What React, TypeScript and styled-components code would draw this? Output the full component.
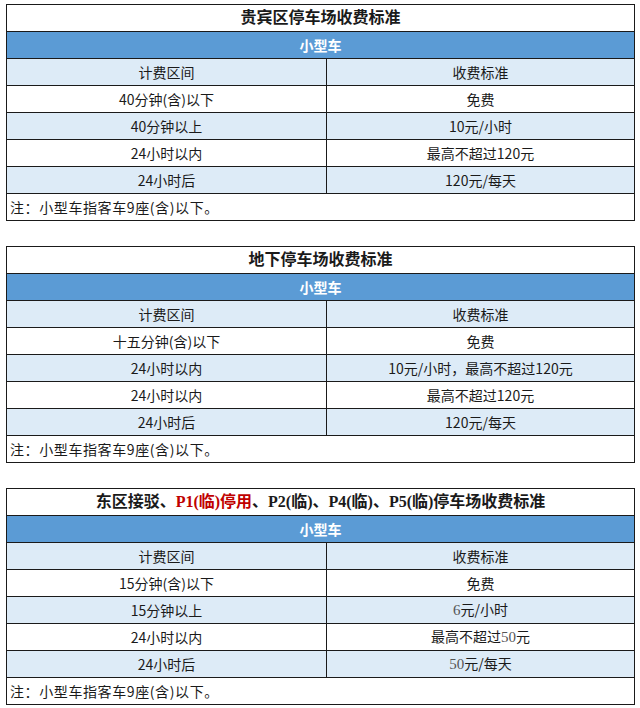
import React from 'react';
import styled, {createGlobalStyle} from 'styled-components';

const GlobalStyle = createGlobalStyle`
    html, body {
        margin: 0;
        padding: 0;
        background: #fff;
    }
    body {
        font-family: "Noto Sans CJK SC", "DejaVu Sans", sans-serif;
        color: #111;
    }
`;

const Page = styled.div`
    display: flex;
    flex-direction: column;
    gap: 25px;
    padding: 4px 6px 0 6px;
    width: 628px;
`;

const FeeTable = styled.table`
    width: 628px;
    border-collapse: collapse;
    table-layout: fixed;
    font-size: 14px;
`;

const Cell = styled.td<{$tone?: 'title' | 'blue' | 'light' | 'plain' | 'note'}>`
    height: 26px;
    padding: 0;
    border: 1px solid #1a1a1a;
    text-align: ${p => (p.$tone === 'note' ? 'left' : 'center')};
    padding-left: ${p => (p.$tone === 'note' ? '3px' : '0')};
    line-height: 1;
    white-space: nowrap;
    background: ${p =>
        p.$tone === 'blue' ? '#5b9bd5' : p.$tone === 'light' ? '#ddebf7' : '#fff'};
    color: ${p => (p.$tone === 'blue' ? '#fff' : '#1a1a1a')};
    font-weight: ${p => (p.$tone === 'title' || p.$tone === 'blue' ? 700 : 400)};
    font-size: ${p => (p.$tone === 'title' ? '16px' : '14px')};
    letter-spacing: ${p => (p.$tone === 'note' ? '0.6px' : '0')};
    font-family: ${p =>
        p.$tone === 'title'
            ? '"Liberation Serif", "Noto Sans CJK SC", serif'
            : '"Noto Sans CJK SC", "DejaVu Sans", sans-serif'};
`;

const Red = styled.span`
    color: #c00000;
`;

const Num = styled.span`
    font-family: "Liberation Serif", serif;
    color: #555;
    font-size: 15px;
`;

type Row = {range: React.ReactNode; fee: React.ReactNode};

type TableProps = {title: React.ReactNode; rows: Row[]};

function ParkingTable(props: TableProps) {
    const {title, rows} = props;
    return (
        <FeeTable>
            <colgroup>
                <col style={{width: 320}} />
                <col style={{width: 308}} />
            </colgroup>
            <tbody>
                <tr><Cell colSpan={2} $tone="title">{title}</Cell></tr>
                <tr><Cell colSpan={2} $tone="blue">小型车</Cell></tr>
                <tr>
                    <Cell $tone="light">计费区间</Cell>
                    <Cell $tone="light">收费标准</Cell>
                </tr>
                {
                    rows.map((row, i) => {
                        const tone = i % 2 === 0 ? 'plain' : 'light';
                        return (
                            <tr key={i}>
                                <Cell $tone={tone}>{row.range}</Cell>
                                <Cell $tone={tone}>{row.fee}</Cell>
                            </tr>
                        )
                    })
                }
                <tr><Cell colSpan={2} $tone="note">注：小型车指客车9座(含)以下。</Cell></tr>
            </tbody>
        </FeeTable>
    );
}

const vipRows: Row[] = [
    {range: '40分钟(含)以下', fee: '免费'},
    {range: '40分钟以上', fee: '10元/小时'},
    {range: '24小时以内', fee: '最高不超过120元'},
    {range: '24小时后', fee: '120元/每天'},
];

const undergroundRows: Row[] = [
    {range: '十五分钟(含)以下', fee: '免费'},
    {range: '24小时以内', fee: '10元/小时，最高不超过120元'},
    {range: '24小时以内', fee: '最高不超过120元'},
    {range: '24小时后', fee: '120元/每天'},
];

const eastRows: Row[] = [
    {range: '15分钟(含)以下', fee: '免费'},
    {range: '15分钟以上', fee: <><Num>6</Num>元/小时</>},
    {range: '24小时以内', fee: <>最高不超过<Num>50</Num>元</>},
    {range: '24小时后', fee: <><Num>50</Num>元/每天</>},
];

export default function App() {
    return (
        <>
            <GlobalStyle />
            <Page>
                <ParkingTable title="贵宾区停车场收费标准" rows={vipRows} />
                <ParkingTable title="地下停车场收费标准" rows={undergroundRows} />
                <ParkingTable
                    title={<>东区接驳、<Red>P1(临)停用</Red>、P2(临)、P4(临)、P5(临)停车场收费标准</>}
                    rows={eastRows}
                />
            </Page>
        </>
    );
}
